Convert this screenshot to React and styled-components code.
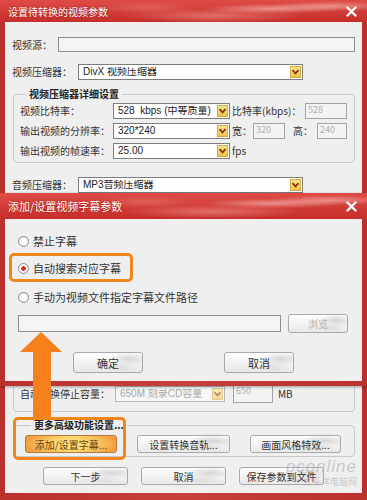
import React from "react";
import styled, { createGlobalStyle, css } from "styled-components";

const GlobalStyle = createGlobalStyle`
  html, body { margin: 0; padding: 0; background: #fff; }
  body { font-family: "Noto Sans CJK SC", "Liberation Sans", sans-serif; }
  * { box-sizing: border-box; }
`;

const Chevron = () => (
  <svg width="9" height="8" viewBox="0 0 9 8">
    <path d="M1.5 2.2 L4.5 5.4 L7.5 2.2" fill="none" stroke="#8e3512" strokeWidth="1.9" />
  </svg>
);

const CloseIcon = () => (
  <svg width="11" height="11" viewBox="0 0 11 11">
    <path d="M1.5 1.5 L9.5 9.5 M9.5 1.5 L1.5 9.5" stroke="#fff" strokeWidth="2.4" strokeLinecap="round" />
  </svg>
);

const Dropdown = ({ width, children, disabled }) => (
  <SelectBox $w={width} $disabled={disabled}>
    <SelectText>{children}</SelectText>
    <DropBtn $disabled={disabled}><Chevron /></DropBtn>
  </SelectBox>
);

const App = () => (
  <>
    <GlobalStyle />
    <Window>
      <TitleBar $h={22} $size={10}>
        <span>设置待转换的视频参数</span>
        <CloseIcon />
      </TitleBar>
      <Body>
        <Row $mt={15} $h={15}>
          <Label $w={46}>视频源：</Label>
          <TextBox $flex />
        </Row>
        <Row $mt={12} $h={16}>
          <Label $w={66}>视频压缩器：</Label>
          <Dropdown width={225}>DivX 视频压缩器</Dropdown>
        </Row>

        <Group $mt={8}>
          <Legend>视频压缩器详细设置</Legend>
          <Row $mt={3} $h={16}>
            <Label $w={93}>视频比特率：</Label>
            <Dropdown width={117}>528  kbps (中等质量)</Dropdown>
            <Label $w={75} $pl={2}>比特率(kbps)：</Label>
            <SmallBox $w={42}>528</SmallBox>
          </Row>
          <Row $mt={4} $h={16}>
            <Label $w={93}>输出视频的分辨率：</Label>
            <Dropdown width={117}>320*240</Dropdown>
            <Label $w={23} $pl={2}>宽：</Label>
            <SmallBox $w={32}>320</SmallBox>
            <Label $w={32} $pl={8}>高：</Label>
            <SmallBox $w={30}>240</SmallBox>
          </Row>
          <Row $mt={4} $h={16}>
            <Label $w={93}>输出视频的帧速率：</Label>
            <Dropdown width={117}>25.00</Dropdown>
            <Label $w={30} $pl={2}>fps</Label>
          </Row>
        </Group>

        <Row $mt={14} $h={16}>
          <Label $w={66}>音频压缩器：</Label>
          <Dropdown width={225}>MP3音频压缩器</Dropdown>
        </Row>

        <PlainGroup>
          <Row $h={19}>
            <Label $w={95}>自动转换停止容量：</Label>
            <Dropdown width={110} disabled>650M 刻录CD容量</Dropdown>
            <SmallBox $w={40} $ml={8} $h={19}>650</SmallBox>
            <Label $w={30} $pl={5}>MB</Label>
          </Row>
        </PlainGroup>

        <Group $mt={7} $pl={11}>
          <Legend>更多高级功能设置...</Legend>
          <ButtonRow $mt={4} $gap={20} $start>
            <Button $w={92} $h={18} $hot>添加/设置字幕...</Button>
            <Button $w={93} $h={18}>设置转换音轨...</Button>
            <Button $w={91} $h={18}>画面风格特效...</Button>
          </ButtonRow>
        </Group>

        <ButtonRow $mt={10} $gap={13}>
          <Button $w={85} $h={18}>下一步</Button>
          <Button $w={85} $h={18}>取消</Button>
          <Button $w={85} $h={18}>保存参数到文件</Button>
        </ButtonRow>
      </Body>

      <Dialog>
        <TitleBar $h={26} $size={11}>
          <span>添加/设置视频字幕参数</span>
          <CloseIcon />
        </TitleBar>
        <DialogBody>
          <RadioRow $mt={0}>
            <Radio />
            <span>禁止字幕</span>
          </RadioRow>
          <RadioRow $mt={13} $hot>
            <Radio $checked />
            <span>自动搜索对应字幕</span>
          </RadioRow>
          <RadioRow $mt={15}>
            <Radio />
            <span>手动为视频文件指定字幕文件路径</span>
          </RadioRow>
          <Row $mt={10} $h={19} $gap={7}>
            <TextBox $w={263} $h={17} />
            <Button $w={60} $h={19} $disabled>浏览</Button>
          </Row>
          <ButtonRow $mt={19} $gap={81}>
            <Button $w={70} $h={21} $big>确定</Button>
            <Button $w={70} $h={21} $big>取消</Button>
          </ButtonRow>
        </DialogBody>
      </Dialog>

      <Arrow width="46" height="88" viewBox="0 0 46 88">
        <path d="M23 1 L44 21 L33 21 L33 88 L15 88 L15 21 L2 21 Z" fill="#f5801c" />
      </Arrow>
      <Highlight />
      <Watermark>
        <span>pconline</span>
        <small>太平洋电脑网</small>
      </Watermark>
    </Window>
  </>
);

export default App;

const Window = styled.div`
  position: relative;
  width: 367px;
  height: 500px;
  display: flex;
  flex-direction: column;
  background: linear-gradient(90deg, #b9302c, #c7403a 50%, #b9302c);
  overflow: hidden;
`;

const TitleBar = styled.div`
  height: ${p => p.$h}px;
  flex-shrink: 0;
  display: flex;
  align-items: center;
  justify-content: space-between;
  padding: 0 10px 0 8px;
  color: #fff;
  font-size: ${p => p.$size}px;
  text-shadow: 0 0 2px rgba(120, 0, 0, 0.7);
  background:
    radial-gradient(ellipse 70px 5px at 74% 40%, rgba(255, 215, 210, 0.55), transparent),
    radial-gradient(ellipse 90px 7px at 58% 72%, rgba(255, 195, 190, 0.4), transparent),
    radial-gradient(ellipse 60px 5px at 90% 28%, rgba(255, 220, 215, 0.5), transparent),
    radial-gradient(ellipse 50px 6px at 40% 35%, rgba(255, 190, 185, 0.25), transparent),
    linear-gradient(#df4c46, #c52e2a);
`;

const Body = styled.div`
  flex: 1;
  margin: 0 5px 7px;
  padding: 0 7px;
  background: #efefef;
  display: flex;
  flex-direction: column;
  font-size: 10px;
  color: #333;
`;

const Row = styled.div`
  display: flex;
  align-items: center;
  height: ${p => p.$h}px;
  margin-top: ${p => p.$mt || 0}px;
  gap: ${p => p.$gap || 0}px;
`;

const Label = styled.span`
  width: ${p => p.$w}px;
  padding-left: ${p => p.$pl || 0}px;
  flex-shrink: 0;
  white-space: nowrap;
  line-height: 1;
`;

const TextBox = styled.div`
  ${p => (p.$flex ? "flex: 1;" : `width: ${p.$w}px;`)}
  height: ${p => p.$h || 15}px;
  border: 1px solid #8e8e8e;
  background: #f4f4f4;
`;

const SelectBox = styled.div`
  width: ${p => p.$w}px;
  height: 16px;
  flex-shrink: 0;
  display: flex;
  align-items: center;
  padding-left: 4px;
  border: 1px solid ${p => (p.$disabled ? "#b8b8b8" : "#7d7d7d")};
  background: ${p => (p.$disabled ? "#f6f6f6" : "#fff")};
  color: ${p => (p.$disabled ? "#a8a8a8" : "#222")};
`;

const SelectText = styled.span`
  flex: 1;
  white-space: pre;
  overflow: hidden;
  font-family: "Liberation Sans", "Noto Sans CJK SC", sans-serif;
  font-size: 10px;
  line-height: 1;
`;

const DropBtn = styled.span`
  width: 11px;
  height: 12px;
  margin-right: 1px;
  flex-shrink: 0;
  display: flex;
  align-items: center;
  justify-content: center;
  border: 1px solid #d2aa3e;
  background: linear-gradient(#fbe58e, #efc44c);
  opacity: ${p => (p.$disabled ? 0.55 : 1)};
`;

const SmallBox = styled.div`
  width: ${p => p.$w}px;
  height: ${p => p.$h || 16}px;
  margin-left: ${p => p.$ml || 0}px;
  flex-shrink: 0;
  border: 1px solid #a2a2a2;
  background: #f3f3f3;
  color: #b0b0b0;
  font-size: 9px;
  line-height: 1;
  padding: 1px 2px;
`;

const Group = styled.fieldset`
  margin: ${p => p.$mt}px 0 0 1px;
  padding: 0 7px 3px ${p => p.$pl || 6}px;
  border: 1px solid #c8c8c8;
  border-radius: 4px;
  min-width: 0;
`;

const Legend = styled.legend`
  margin-left: 6px;
  padding: 0 3px;
  font-size: 10px;
  font-weight: bold;
  line-height: 12px;
  color: #222;
`;

const PlainGroup = styled.div`
  margin: 22px 0 0 1px;
  height: 197px;
  padding: 0 7px 8px 6px;
  border: 1px solid #c8c8c8;
  border-radius: 4px;
  display: flex;
  flex-direction: column;
  justify-content: flex-end;
`;

const ButtonRow = styled.div`
  display: flex;
  justify-content: ${p => (p.$start ? "flex-start" : "center")};
  gap: ${p => p.$gap}px;
  margin-top: ${p => p.$mt}px;
`;

const Button = styled.div`
  width: ${p => p.$w}px;
  height: ${p => p.$h}px;
  flex-shrink: 0;
  display: flex;
  align-items: center;
  justify-content: center;
  border: 1px solid #a9a9a9;
  border-radius: 3px;
  font-size: ${p => (p.$big ? 11 : 10)}px;
  color: ${p => (p.$disabled ? "#b2b2b2" : "#333")};
  background:
    radial-gradient(ellipse 30% 35% at 82% 30%, rgba(150, 150, 150, 0.35), transparent),
    radial-gradient(ellipse 25% 25% at 70% 75%, rgba(170, 170, 170, 0.25), transparent),
    linear-gradient(#fefefe, #e8e8e8);
  ${p =>
    p.$hot &&
    css`
      border-color: #b07a3a;
      color: #6a3a10;
      background:
        radial-gradient(ellipse 55% 60% at 50% 50%, #ffe37c, transparent),
        linear-gradient(90deg, #f29a3a, #fbd36a 50%, #f29a3a);
    `}
`;

const Dialog = styled.div`
  position: absolute;
  left: 0;
  top: 193px;
  width: 367px;
  height: 193px;
  display: flex;
  flex-direction: column;
  background: linear-gradient(90deg, #b9302c, #c7403a 50%, #b9302c);
  box-shadow: 0 1px 3px rgba(0, 0, 0, 0.35);
`;

const DialogBody = styled.div`
  flex: 1;
  margin: 0 5px 5px;
  padding: 15px 13px 0;
  background: #efefef;
  display: flex;
  flex-direction: column;
  font-size: 11px;
  color: #333;
`;

const RadioRow = styled.div`
  position: relative;
  align-self: flex-start;
  display: flex;
  align-items: center;
  gap: 4px;
  height: 14px;
  margin-top: ${p => p.$mt}px;
  line-height: 1;
  ${p =>
    p.$hot &&
    css`
      &::after {
        content: "";
        position: absolute;
        inset: -8px -12px -7px -9px;
        border: 3px solid #f0871d;
        border-radius: 5px;
      }
    `}
`;

const Radio = styled.span`
  width: 11px;
  height: 11px;
  border-radius: 50%;
  border: 1px solid #8d8d8d;
  background: ${p =>
    p.$checked
      ? "radial-gradient(circle, #d42a22 0 2px, #fff 2.6px, #e6e6e6)"
      : "radial-gradient(circle, #fff 40%, #e2e2e2)"};
`;

const Arrow = styled.svg`
  position: absolute;
  left: 18px;
  top: 331px;
`;

const Highlight = styled.div`
  position: absolute;
  left: 13px;
  top: 417px;
  width: 113px;
  height: 43px;
  border: 3px solid #f0871d;
  border-radius: 5px;
`;

const Watermark = styled.div`
  position: absolute;
  right: 10px;
  bottom: 14px;
  display: flex;
  flex-direction: column;
  align-items: flex-end;
  color: rgba(150, 150, 160, 0.45);
  font-family: "Liberation Sans", sans-serif;
  line-height: 1;

  span {
    font-size: 17px;
    font-style: italic;
    letter-spacing: 1px;
  }

  small {
    font-family: "Noto Sans CJK SC", sans-serif;
    font-size: 9px;
    margin-top: 2px;
  }
`;
